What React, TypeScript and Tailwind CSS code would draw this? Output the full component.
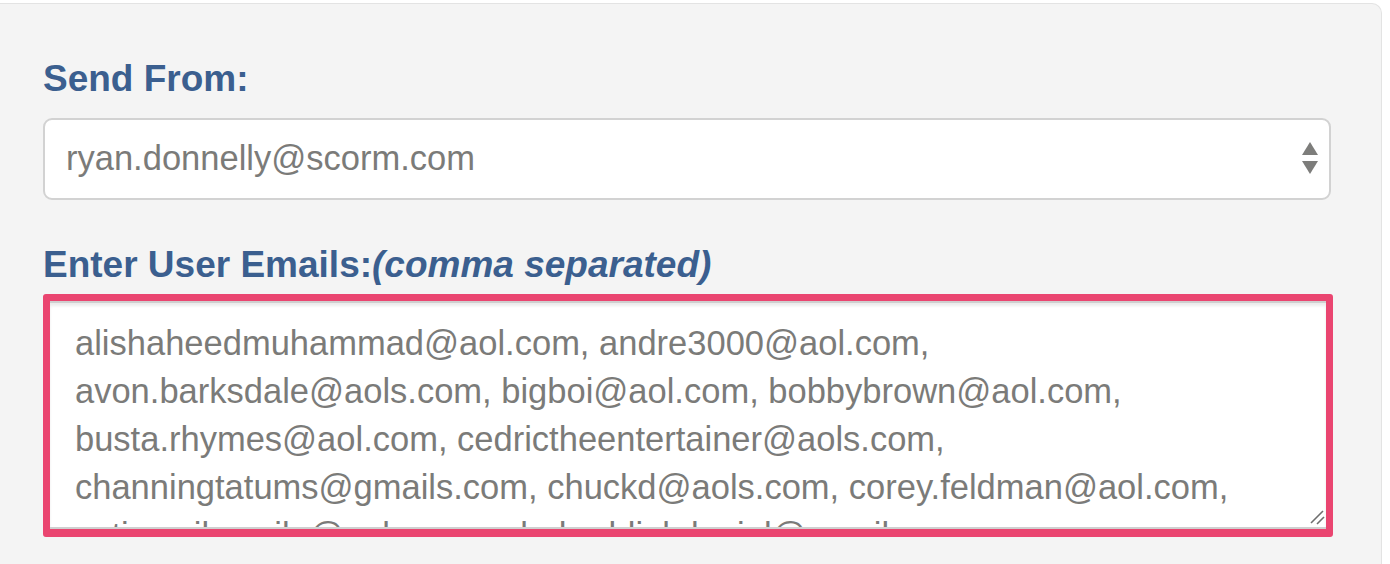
import React from "react";

const lines = [
  "alishaheedmuhammad@aol.com, andre3000@aol.com,",
  "avon.barksdale@aols.com, bigboi@aol.com, bobbybrown@aol.com,",
  "busta.rhymes@aol.com, cedrictheentertainer@aols.com,",
  "channingtatums@gmails.com, chuckd@aols.com, corey.feldman@aol.com,",
  "cutiesmilesmile@aol.com, cubaheddinkdaniel@gmail.com,",
];

export default function App() {
  return (
    <div
      className="w-[1390px] h-[564px] bg-white overflow-hidden pt-[3px]"
      style={{ fontFamily: '"Liberation Sans", Arial, sans-serif' }}
    >
      <div className="w-[1382px] h-[600px] bg-[#f4f4f4] border-t border-r border-[#e3e3e3] rounded-tr-[10px] pl-[43px] pt-[55px]">
        <div className="text-[37px] leading-[40px] font-bold text-[#3b5f8f]">Send From:</div>

        <div className="mt-[19px] w-[1288px] h-[82px] bg-white border-2 border-[#d2d2d2] rounded-[9px] flex items-center pl-[21px] pr-[11px]">
          <span className="flex-1 text-[34.5px] text-[#7b7b79]">ryan.donnelly@scorm.com</span>
          <svg width="16" height="34" viewBox="0 0 16 34" className="shrink-0">
            <polygon points="8,0 16,13 0,13" fill="#7d7d7b" />
            <polygon points="0,19 16,19 8,32" fill="#7d7d7b" />
          </svg>
        </div>

        <div className="mt-[45px] text-[37px] leading-[40px] font-bold text-[#3b5f8f]">
          Enter User Emails:<span className="italic">(comma separated)</span>
        </div>

        <div className="mt-[9px] w-[1290px] h-[243px] border-[7px] border-b-[8px] border-[#ea4570] rounded-[3px] bg-white">
          <div className="relative h-full border-t-2 border-b-2 border-[#cfcfcf] shadow-[inset_0_3px_3px_rgba(0,0,0,0.08)] overflow-hidden pl-[25px] pt-[16px]">
            {lines.map((l, i) => (
              <div key={i} className="whitespace-nowrap text-[34.5px] leading-[48px] text-[#7b7b79]">
                {l}
              </div>
            ))}
            <svg width="16" height="16" viewBox="0 0 16 16" className="absolute right-[1px] bottom-[2px]">
              <line x1="2" y1="14" x2="14" y2="2" stroke="#6e6e6e" strokeWidth="1.6" />
              <line x1="8" y1="15" x2="15" y2="8" stroke="#6e6e6e" strokeWidth="1.6" />
            </svg>
          </div>
        </div>
      </div>
    </div>
  );
}
